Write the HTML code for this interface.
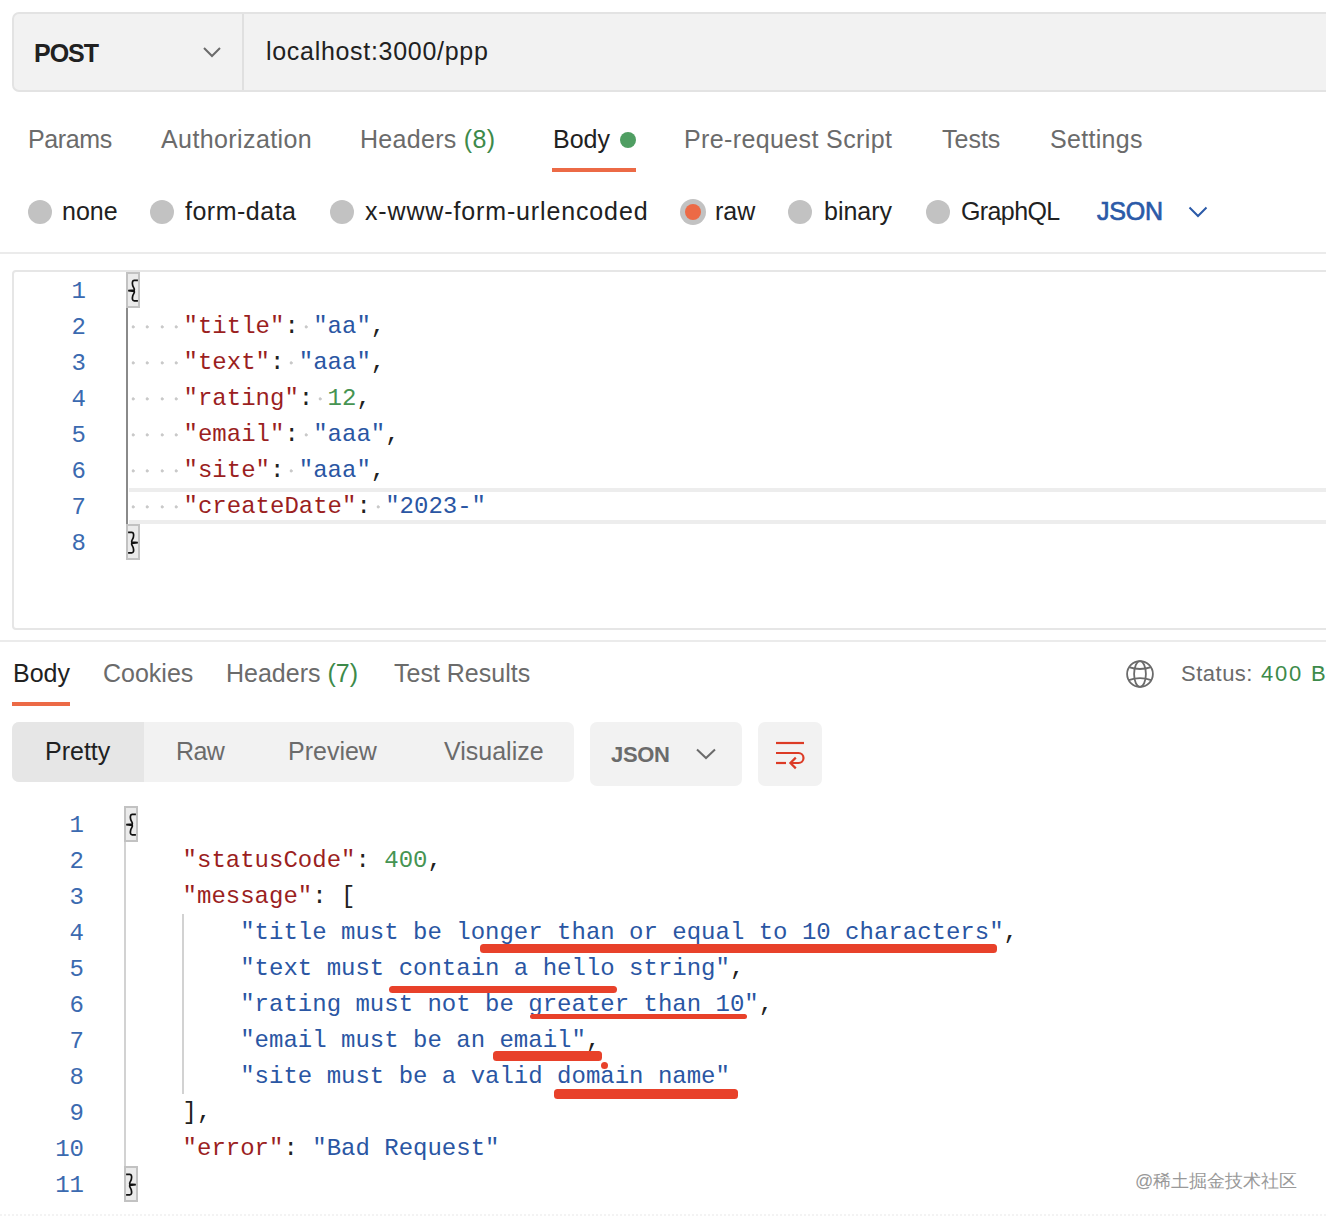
<!DOCTYPE html>
<html><head><meta charset="utf-8">
<style>
*{margin:0;padding:0;box-sizing:border-box}
html,body{width:1326px;height:1222px;overflow:hidden;background:#fff}
body{position:relative;font-family:"Liberation Sans",sans-serif;color:#212121}
.a{position:absolute}
.t{position:absolute;font-size:25px;line-height:25px;white-space:pre;color:#6b6b6b}
.dk{color:#212121}
.gr{color:#3d8a4a}
.urlbar{left:12px;top:12px;width:1330px;height:80px;background:#f2f2f2;border:2px solid #e3e3e3;border-radius:7px}
.div{left:242px;top:14px;width:2px;height:76px;background:#e0e0e0}
.rad{position:absolute;width:24px;height:24px;border-radius:50%;background:#c2c2c2}
.hl{position:absolute;height:2px;background:#ebebeb}
.code{position:absolute;font-family:"Liberation Mono",monospace;font-size:24px;line-height:36px;white-space:pre;color:#212121}
.ln{position:absolute;font-family:"Liberation Mono",monospace;font-size:24px;line-height:36px;white-space:pre;color:#3b6ab0;text-align:right;width:60px}
.k{color:#9b1f1f}
.s{color:#2a56a3}
.n{color:#469452}
.p{color:#212121}
.dt{display:inline-block;width:14.4px;height:36px;vertical-align:top;background:radial-gradient(circle at 7.2px 17.9px,#c9c9c9 1.2px,rgba(201,201,201,0) 1.9px)}
.br{position:absolute;width:14px;height:36px;background:#ebebeb;border:2px solid #c2c2c2}
.red{position:absolute;background:#e8412a;border-radius:3.5px}
</style></head><body>

<!-- URL bar -->
<div class="a urlbar"></div>
<div class="a div"></div>
<div class="t dk" style="left:34px;top:41px;font-weight:700;letter-spacing:-1px">POST</div>
<svg class="a" style="left:202px;top:45px" width="20" height="14"><polyline points="2,3 10,11 18,3" fill="none" stroke="#6b6b6b" stroke-width="2"/></svg>
<div class="t dk" style="left:266px;top:39px;letter-spacing:0.7px">localhost:3000/ppp</div>

<!-- request tabs -->
<div class="t" style="left:28px;top:127px;letter-spacing:-0.4px">Params</div>
<div class="t" style="left:161px;top:127px;letter-spacing:0.4px">Authorization</div>
<div class="t" style="left:360px;top:127px;letter-spacing:0.3px">Headers <span class="gr">(8)</span></div>
<div class="t dk" style="left:553px;top:127px">Body</div>
<div class="a" style="left:620px;top:132px;width:16px;height:16px;border-radius:50%;background:#4f9e62"></div>
<div class="a" style="left:552px;top:168px;width:84px;height:4px;background:#ec6a46"></div>
<div class="t" style="left:684px;top:127px;letter-spacing:0.38px">Pre-request Script</div>
<div class="t" style="left:942px;top:127px">Tests</div>
<div class="t" style="left:1050px;top:127px;letter-spacing:0.3px">Settings</div>

<!-- radio row -->
<div class="rad" style="left:28px;top:200px"></div>
<div class="t dk" style="left:62px;top:199px">none</div>
<div class="rad" style="left:150px;top:200px"></div>
<div class="t dk" style="left:185px;top:199px;letter-spacing:0.5px">form-data</div>
<div class="rad" style="left:330px;top:200px"></div>
<div class="t dk" style="left:365px;top:199px;letter-spacing:0.86px">x-www-form-urlencoded</div>
<div class="rad" style="left:680px;top:199px;width:26px;height:26px"></div>
<div class="a" style="left:685px;top:204px;width:16px;height:16px;border-radius:50%;background:#ec6a46"></div>
<div class="t dk" style="left:715px;top:199px">raw</div>
<div class="rad" style="left:788px;top:200px"></div>
<div class="t dk" style="left:824px;top:199px">binary</div>
<div class="rad" style="left:926px;top:200px"></div>
<div class="t dk" style="left:961px;top:199px;letter-spacing:-0.6px">GraphQL</div>
<div class="t" style="left:1097px;top:199px;color:#2b5aa8;-webkit-text-stroke:0.7px #2b5aa8;letter-spacing:-0.2px">JSON</div>
<svg class="a" style="left:1187px;top:204px" width="22" height="16"><polyline points="2.5,3.5 11,12 19.5,3.5" fill="none" stroke="#2b5aa8" stroke-width="2"/></svg>

<div class="hl" style="left:0;top:252px;width:1326px"></div>

<!-- request editor -->
<div class="a" style="left:12px;top:270px;width:1340px;height:360px;border:2px solid #e6e6e6;border-radius:4px"></div>

<div class="a" style="left:129px;top:488px;width:1200px;height:36px;border-top:4px solid #ededed;border-bottom:4px solid #ededed"></div>
<div class="a" style="left:126px;top:308px;width:2px;height:216px;background:#8a8a8a"></div>
<div class="br" style="left:126px;top:272px"><svg class="a" style="left:-2px;top:-2px" width="14" height="36" viewBox="0 0 14 36"><path d="M11.9,8.3 H8.2 C6.2,8.3 6.1,11 6.7,13.5 C7.2,15.5 8.9,16.6 8.3,18 L2.2,18.6 L8.3,19.3 C8.9,20.8 7.2,22 6.7,24 C6.1,26.5 6.2,28.8 8.2,28.8 H11.9" fill="none" stroke="#111" stroke-width="1.7"/></svg></div>
<div class="br" style="left:126px;top:524px"><svg class="a" style="left:-2px;top:-2px;transform:scaleX(-1)" width="14" height="36" viewBox="0 0 14 36"><path d="M11.9,8.3 H8.2 C6.2,8.3 6.1,11 6.7,13.5 C7.2,15.5 8.9,16.6 8.3,18 L2.2,18.6 L8.3,19.3 C8.9,20.8 7.2,22 6.7,24 C6.1,26.5 6.2,28.8 8.2,28.8 H11.9" fill="none" stroke="#111" stroke-width="1.7"/></svg></div>
<div class="ln" style="left:26px;top:274px">1
2
3
4
5
6
7
8</div>
<div class="code" style="left:126px;top:273px"> 
<span class="dt"></span><span class="dt"></span><span class="dt"></span><span class="dt"></span><span class="k">"title"</span><span class="p">:</span><span class="dt"></span><span class="s">"aa"</span><span class="p">,</span>
<span class="dt"></span><span class="dt"></span><span class="dt"></span><span class="dt"></span><span class="k">"text"</span><span class="p">:</span><span class="dt"></span><span class="s">"aaa"</span><span class="p">,</span>
<span class="dt"></span><span class="dt"></span><span class="dt"></span><span class="dt"></span><span class="k">"rating"</span><span class="p">:</span><span class="dt"></span><span class="n">12</span><span class="p">,</span>
<span class="dt"></span><span class="dt"></span><span class="dt"></span><span class="dt"></span><span class="k">"email"</span><span class="p">:</span><span class="dt"></span><span class="s">"aaa"</span><span class="p">,</span>
<span class="dt"></span><span class="dt"></span><span class="dt"></span><span class="dt"></span><span class="k">"site"</span><span class="p">:</span><span class="dt"></span><span class="s">"aaa"</span><span class="p">,</span>
<span class="dt"></span><span class="dt"></span><span class="dt"></span><span class="dt"></span><span class="k">"createDate"</span><span class="p">:</span><span class="dt"></span><span class="s">"2023-"</span>
 </div>

<div class="hl" style="left:0;top:640px;width:1326px"></div>

<!-- response tabs -->
<div class="t dk" style="left:13px;top:661px">Body</div>
<div class="a" style="left:12px;top:702px;width:58px;height:4px;background:#ec6a46"></div>
<div class="t" style="left:103px;top:661px">Cookies</div>
<div class="t" style="left:226px;top:661px">Headers <span class="gr">(7)</span></div>
<div class="t" style="left:394px;top:661px">Test Results</div>
<svg class="a" style="left:1124px;top:658px" width="32" height="32" viewBox="0 0 32 32"><g fill="none" stroke="#6b6b6b" stroke-width="1.8"><circle cx="16" cy="16" r="12.9"/><ellipse cx="16" cy="16" rx="5.9" ry="12.9"/><path d="M4.8,9.2 Q16,12.8 27.2,9.2"/><path d="M4.8,22.2 Q16,18.2 27.2,22.2"/></g></svg>
<div class="t" style="left:1181px;top:663px;font-size:22px;line-height:22px;letter-spacing:0.5px">Status:</div><div class="t gr" style="left:1261px;top:663px;font-size:22px;line-height:22px;letter-spacing:1.8px">400</div><div class="t gr" style="left:1311px;top:663px;font-size:22px;line-height:22px">Bad</div>

<!-- segmented -->
<div class="a" style="left:12px;top:722px;width:562px;height:60px;background:#f2f2f2;border-radius:7px"></div>
<div class="a" style="left:12px;top:722px;width:132px;height:60px;background:#e6e6e6;border-radius:7px 0 0 7px"></div>
<div class="t dk" style="left:45px;top:739px">Pretty</div>
<div class="t" style="left:176px;top:739px;letter-spacing:-0.6px">Raw</div>
<div class="t" style="left:288px;top:739px">Preview</div>
<div class="t" style="left:444px;top:739px">Visualize</div>
<div class="a" style="left:590px;top:722px;width:152px;height:64px;background:#f2f2f2;border-radius:7px"></div>
<div class="t" style="left:611px;top:744px;font-weight:700;font-size:22px;line-height:22px;letter-spacing:-0.3px">JSON</div>
<svg class="a" style="left:695px;top:747px" width="22" height="14"><polyline points="2,2.5 11,11 20,2.5" fill="none" stroke="#6b6b6b" stroke-width="2"/></svg>
<div class="a" style="left:758px;top:722px;width:64px;height:64px;background:#f2f2f2;border-radius:7px"></div>
<svg class="a" style="left:758px;top:722px" width="64" height="64" viewBox="0 0 64 64"><g fill="none" stroke="#dc3b26" stroke-width="2.2"><path d="M18,21 H46"/><path d="M18,31 H40.5 A5,5 0 0 1 40.5,41 H33"/><path d="M37.8,35.6 L32.4,41 L37.8,46.4"/><path d="M18,41 H28"/></g></svg>

<!-- response editor -->
<div class="a" style="left:124px;top:842px;width:2px;height:324px;background:#d2d2d2"></div>
<div class="a" style="left:182px;top:914px;width:2px;height:180px;background:#d2d2d2"></div>
<div class="br" style="left:124px;top:806px"><svg class="a" style="left:-2px;top:-2px" width="14" height="36" viewBox="0 0 14 36"><path d="M11.9,8.3 H8.2 C6.2,8.3 6.1,11 6.7,13.5 C7.2,15.5 8.9,16.6 8.3,18 L2.2,18.6 L8.3,19.3 C8.9,20.8 7.2,22 6.7,24 C6.1,26.5 6.2,28.8 8.2,28.8 H11.9" fill="none" stroke="#111" stroke-width="1.7"/></svg></div>
<div class="br" style="left:124px;top:1166px"><svg class="a" style="left:-2px;top:-2px;transform:scaleX(-1)" width="14" height="36" viewBox="0 0 14 36"><path d="M11.9,8.3 H8.2 C6.2,8.3 6.1,11 6.7,13.5 C7.2,15.5 8.9,16.6 8.3,18 L2.2,18.6 L8.3,19.3 C8.9,20.8 7.2,22 6.7,24 C6.1,26.5 6.2,28.8 8.2,28.8 H11.9" fill="none" stroke="#111" stroke-width="1.7"/></svg></div>
<div class="ln" style="left:24px;top:808px">1
2
3
4
5
6
7
8
9
10
11</div>
<div class="code" style="left:125px;top:807px"> 
    <span class="k">"statusCode"</span><span class="p">: </span><span class="n">400</span><span class="p">,</span>
    <span class="k">"message"</span><span class="p">: [</span>
        <span class="s">"title must be longer than or equal to 10 characters"</span><span class="p">,</span>
        <span class="s">"text must contain a hello string"</span><span class="p">,</span>
        <span class="s">"rating must not be greater than 10"</span><span class="p">,</span>
        <span class="s">"email must be an email"</span><span class="p">,</span>
        <span class="s">"site must be a valid domain name"</span>
    <span class="p">],</span>
    <span class="k">"error"</span><span class="p">: </span><span class="s">"Bad Request"</span>
 </div>

<!-- annotations -->
<div class="red" style="left:480px;top:944px;width:517px;height:9px"></div>
<div class="red" style="left:389px;top:986px;width:228px;height:7px"></div>
<div class="red" style="left:530px;top:1014px;width:217px;height:5px"></div>
<div class="red" style="left:493px;top:1051px;width:109px;height:10px"></div>
<div class="red" style="left:601px;top:1062px;width:7px;height:7px;border-radius:50%"></div>
<div class="red" style="left:554px;top:1089px;width:184px;height:10px"></div>

<div class="t" style="left:1135px;top:1172px;font-size:18px;line-height:18px;color:#999">@稀土掘金技术社区</div>
<div class="a" style="left:0;top:1214px;width:1326px;height:0;border-top:2px dotted #f3f3f3"></div>
</body></html>
